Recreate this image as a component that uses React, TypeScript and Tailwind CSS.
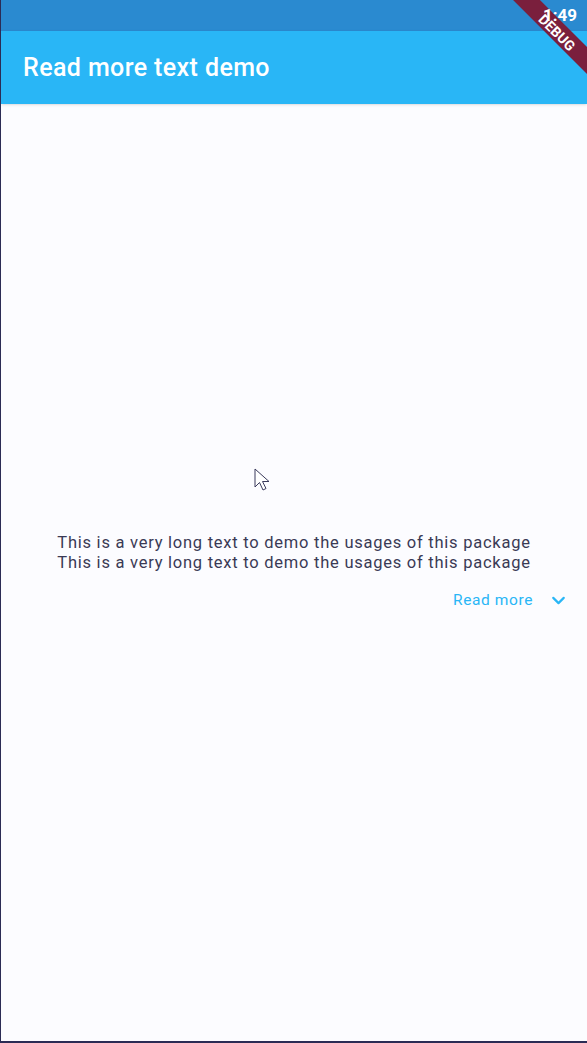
import { ChevronDown } from 'lucide-react'

function DebugBanner() {
  return (
    <div className="absolute top-0 right-0 w-[100px] h-[100px] overflow-hidden pointer-events-none">
      <div className="absolute left-[-4px] top-[22px] w-[150px] h-[19px] bg-[#7a1f3d] rotate-45 flex items-center justify-center">
        <span className="text-[14px] font-bold text-white leading-none pt-[2px]">DEBUG</span>
      </div>
    </div>
  )
}

function Cursor() {
  return (
    <svg className="absolute left-[253px] top-[468px]" width="18" height="26" viewBox="0 0 18 26">
      <path d="M1 1 L1 19 L5.5 14.5 L9 22 L12 20.5 L8.5 13.5 L15 13.5 Z" fill="white" stroke="#3b3b5c" strokeWidth="1" strokeLinejoin="round" />
    </svg>
  )
}

export default function App() {
  const line = 'This is a very long text to demo the usages of this package'

  return (
    <div className="relative w-[587px] h-[1043px] bg-[#fcfcff] flex flex-col border-l border-l-[#2b2b55] border-b-2 border-b-[#2b2b55] overflow-hidden font-[Roboto,'Liberation_Sans',sans-serif]">
      <div className="h-[31px] bg-[#2a8ad0] shrink-0" />
      <header className="h-[73px] bg-[#29b6f6] flex items-center px-[22px] shadow-sm shrink-0">
        <h1 className="text-white text-[25px] font-medium leading-none tracking-[0.4px]">Read more text demo</h1>
      </header>
      <main className="flex-1 flex flex-col justify-center">
        <p className="text-center text-[#3a3a55] text-[16.5px] leading-[20px] tracking-[0.75px]">
          {line}
          <br />
          {line}
        </p>
        <div className="flex items-center justify-end mt-[16px] pr-[18px]">
          <span className="text-[#29b6f6] text-[15.5px] tracking-[0.6px]">Read more</span>
          <ChevronDown className="ml-[15px] w-[21px] h-[21px] text-[#29b6f6]" strokeWidth={2.5} />
        </div>
      </main>
      <Cursor />
      <DebugBanner />
      <span className="absolute top-[7px] right-[10px] text-white font-bold text-[17px] leading-none">1:49</span>
    </div>
  )
}
